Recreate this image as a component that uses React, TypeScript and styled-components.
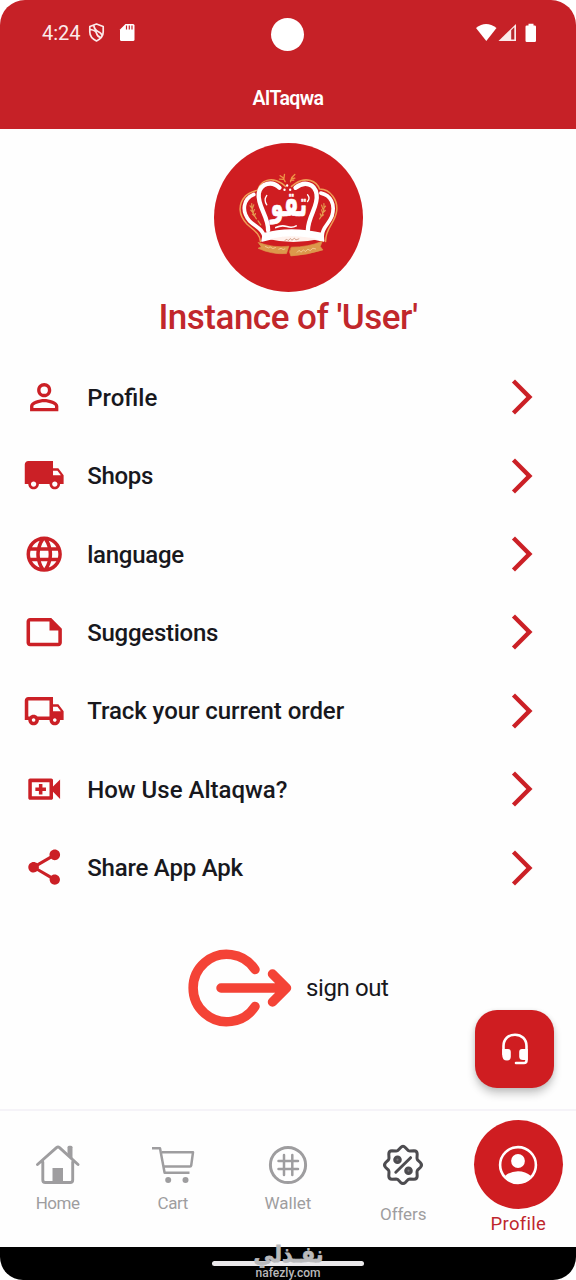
import React from "react";
import styled, { createGlobalStyle } from "styled-components";

const RED = "#cf1d21";

const GlobalStyle = createGlobalStyle`
  * { box-sizing: border-box; }
  body { margin: 0; background: #fff; }
  svg { display: block; flex: none; }
`;

const Screen = styled.div`
  position: relative;
  display: flex;
  flex-direction: column;
  width: 576px;
  height: 1280px;
  overflow: hidden;
  border-radius: 25px 25px 23px 23px;
  background: #fefefe;
  font-family: Roboto, "Liberation Sans", sans-serif;
  color: #18181d;
`;

const Header = styled.header`
  height: 129px;
  flex: none;
  background: #c62127;
  color: #fff;
`;

const StatusBar = styled.div`
  display: grid;
  grid-template-columns: 1fr 33px 1fr;
  align-items: center;
  height: 64px;
  padding: 5px 39px 0 42px;
`;

const StatusGroup = styled.div<{ $end?: boolean }>`
  display: flex;
  align-items: center;
  justify-content: ${(p) => (p.$end ? "flex-end" : "flex-start")};
  height: 24px;
  margin-bottom: 4px;
`;

const Clock = styled.span`
  width: 46px;
  font-size: 20px;
  line-height: 24px;
  color: #fbeaea;
`;

const Camera = styled.div`
  width: 33px;
  height: 33px;
  margin-left: -2px;
  border-radius: 50%;
  background: #fff;
`;

const Label = styled.span<{ $size: number; $spacing?: number; $weight?: number }>`
  font-size: ${(p) => p.$size}px;
  font-weight: ${(p) => p.$weight ?? 400};
  letter-spacing: ${(p) => p.$spacing ?? 0}px;
  line-height: 1.2;
  white-space: nowrap;
`;

const AppTitle = styled.h1`
  display: flex;
  justify-content: center;
  margin: 0;
  padding-top: 23px;
`;

const Identity = styled.section`
  display: flex;
  flex-direction: column;
  align-items: center;
  height: 229px;
  flex: none;
  padding-top: 14px;
  color: #c1272b;
`;

const UserName = styled.div`
  height: 50px;
  padding-top: 5px;
`;

const Menu = styled.nav`
  display: flex;
  flex-direction: column;
  flex: none;
`;

const MenuRow = styled.a`
  display: grid;
  grid-template-columns: 42.4px 1fr 42px;
  column-gap: 22px;
  align-items: center;
  height: 78.4px;
  padding: 0 33.4px 0 22.8px;

  span {
    padding-top: 2px;
  }
`;

const SignOut = styled.button`
  display: flex;
  align-items: center;
  gap: 14px;
  height: 78px;
  margin: 42px 0 0 188px;
  padding: 0;
  border: 0;
  background: none;
  color: inherit;
  font-family: inherit;

  span {
    padding-top: 1px;
  }
`;

const SupportButton = styled.button`
  position: absolute;
  left: 475.3px;
  top: 1009.5px;
  display: grid;
  place-items: center;
  width: 78.6px;
  height: 78.6px;
  padding: 0;
  border: 0;
  border-radius: 22px;
  background: ${RED};
  box-shadow: 0 6px 9px rgba(0, 0, 0, 0.2), 0 1px 5px rgba(0, 0, 0, 0.1);
`;

const TabBar = styled.nav`
  display: grid;
  grid-template-columns: repeat(5, 1fr);
  height: 137.5px;
  flex: none;
  margin-top: auto;
  border-top: 2px solid #f5f3f8;
  background: #fefefe;
`;

const Tab = styled.a<{ $top: number; $gap: number; $active?: boolean }>`
  display: flex;
  flex-direction: column;
  align-items: center;
  gap: ${(p) => p.$gap}px;
  padding-top: ${(p) => p.$top}px;
  color: ${(p) => (p.$active ? "#be272d" : "#9e9d9f")};
`;

const ActiveDisc = styled.div`
  display: grid;
  place-items: center;
  width: 89px;
  height: 89px;
  border-radius: 50%;
  background: ${RED};
`;

const SystemBar = styled.footer`
  display: flex;
  justify-content: center;
  height: 33.5px;
  flex: none;
  padding-top: 14px;
  background: #000;
`;

const HomeHandle = styled.div`
  width: 152px;
  height: 5.5px;
  border-radius: 3px;
  background: #ebe9eb;
`;

const Watermark = styled.div`
  position: absolute;
  left: 238px;
  top: 1236px;
`;

const MENU = [
  {
    label: "Profile",
    spacing: 0,
    d: "M12 5.9a2.1 2.1 0 1 1 0 4.2 2.1 2.1 0 0 1 0-4.2m0 9c2.97 0 6.1 1.46 6.1 2.1v1.1H5.9V17c0-.64 3.13-2.1 6.1-2.1M12 4C9.79 4 8 5.79 8 8s1.79 4 4 4 4-1.79 4-4-1.79-4-4-4zm0 9c-2.67 0-8 1.34-8 4v3h16v-3c0-2.66-5.33-4-8-4z",
  },
  {
    label: "Shops",
    spacing: -0.3,
    d: "M20 8h-3V4H3c-1.1 0-2 .9-2 2v11h2c0 1.66 1.34 3 3 3s3-1.34 3-3h6c0 1.66 1.34 3 3 3s3-1.34 3-3h2v-5l-3-4zM6 18.5c-.83 0-1.5-.67-1.5-1.5s.67-1.5 1.5-1.5 1.5.67 1.5 1.5-.67 1.5-1.5 1.5zm13.5-9l1.96 2.5H17V9.5h2.5zM18 18.5c-.83 0-1.5-.67-1.5-1.5s.67-1.5 1.5-1.5 1.5.67 1.5 1.5-.67 1.5-1.5 1.5z",
  },
  {
    label: "language",
    spacing: -0.25,
    d: "M11.99 2C6.47 2 2 6.48 2 12s4.47 10 9.99 10C17.52 22 22 17.52 22 12S17.52 2 11.99 2zm6.93 6h-2.95c-.32-1.25-.78-2.45-1.38-3.56 1.84.63 3.37 1.91 4.33 3.56zM12 4.04c.83 1.2 1.48 2.53 1.91 3.96h-3.82c.43-1.43 1.08-2.76 1.91-3.96zM4.26 14C4.1 13.36 4 12.69 4 12s.1-1.36.26-2h3.38c-.08.66-.14 1.32-.14 2 0 .68.06 1.34.14 2H4.26zm.82 2h2.95c.32 1.25.78 2.45 1.38 3.56-1.84-.63-3.37-1.9-4.33-3.56zm2.95-8H5.08c.96-1.66 2.49-2.93 4.33-3.56C8.81 5.55 8.35 6.75 8.03 8zM12 19.96c-.83-1.2-1.48-2.53-1.91-3.96h3.82c-.43 1.43-1.08 2.76-1.91 3.96zM14.34 14H9.66c-.09-.66-.16-1.32-.16-2 0-.68.07-1.35.16-2h4.68c.09.65.16 1.32.16 2 0 .68-.07 1.34-.16 2zm.25 5.56c.6-1.11 1.06-2.31 1.38-3.56h2.95c-.96 1.65-2.49 2.93-4.33 3.56zM16.36 14c.08-.66.14-1.32.14-2 0-.68-.06-1.34-.14-2h3.38c.16.64.26 1.31.26 2s-.1 1.36-.26 2h-3.38z",
  },
  {
    label: "Suggestions",
    spacing: -0.25,
    d: "M16 4H4c-1.1 0-2 .9-2 2v12.01c0 1.1.9 1.99 2 1.99h16c1.1 0 2-.9 2-2v-8l-6-6zM4 18.01V6h11v5h5v7.01H4z",
  },
  {
    label: "Track your current order",
    spacing: -0.06,
    d: "M20 8h-3V4H3c-1.1 0-2 .9-2 2v11h2c0 1.66 1.34 3 3 3s3-1.34 3-3h6c0 1.66 1.34 3 3 3s3-1.34 3-3h2v-5l-3-4zm-.5 1.5l1.96 2.5H17V9.5h2.5zM6 18c-.55 0-1-.45-1-1s.45-1 1-1 1 .45 1 1-.45 1-1 1zm2.22-3c-.55-.61-1.33-1-2.22-1s-1.67.39-2.22 1H3V6h12v9H8.22zM18 18c-.55 0-1-.45-1-1s.45-1 1-1 1 .45 1 1-.45 1-1 1z",
  },
  {
    label: "How Use Altaqwa?",
    spacing: 0,
    d: "M17 10.5V7c0-.55-.45-1-1-1H4c-.55 0-1 .45-1 1v10c0 .55.45 1 1 1h12c.55 0 1-.45 1-1v-3.5l4 4v-11l-4 4zM15 16H5V8h10v8zm-6-1h2v-2h2v-2h-2V9H9v2H7v2h2z",
  },
  {
    label: "Share App Apk",
    spacing: -0.2,
    d: "M18 16.08c-.76 0-1.44.3-1.96.77L8.91 12.7c.05-.23.09-.46.09-.7s-.04-.47-.09-.7l7.05-4.11c.54.5 1.25.81 2.04.81 1.66 0 3-1.34 3-3s-1.34-3-3-3-3 1.34-3 3c0 .24.04.47.09.7L8.04 9.81C7.5 9.31 6.79 9 6 9c-1.66 0-3 1.34-3 3s1.34 3 3 3c.79 0 1.5-.31 2.04-.81l7.12 4.16c-.05.21-.08.43-.08.65 0 1.61 1.31 2.92 2.92 2.92s2.92-1.31 2.92-2.92-1.31-2.92-2.92-2.92z",
  },
];

function Crown() {
  return (
    <svg width="149" height="149" viewBox="18 17 446 446" fill="none" strokeLinecap="round" strokeLinejoin="round">
      <circle cx="241" cy="240" r="223" fill={RED} />
      <path d="M157 312 C155 288 139 280 117 260 C90 232 90 200 112 176 C123 164 136 162 149 158 C157 128 190 117 221 138 L232 147 M250 147 L262 138 C294 117 325 130 334 155 C367 155 390 190 385 222 C380 258 351 272 352 312" stroke="#ef9d55" strokeWidth="4.500" />
      <path d="M168 296 C164 274 143 268 124 250 C98 219 107 183 137 171 M342 296 C340 270 361 262 371 236 C382 200 367 173 338 167" stroke="#fff" strokeWidth="11" />
      <path d="M214 151 C192 129 158 137 152 168 C147 205 181 236 180 278 M262 151 C289 129 320 139 325 170 C331 207 300 235 299 278" stroke="#fff" strokeWidth="13" />
      <path d="M166 289 Q246 266 344 289 L346 310 Q246 284 162 310 Z" fill="#fff" stroke="#fff" strokeWidth="5" />
      <path d="M184 305 Q246 287 330 305 Q254 322 184 305" fill="#fff1ec" />
      <path d="M230 309l6-4 4 4 7-6 4 5 8-6 4 5 9-3" stroke="#c07c60" strokeWidth="2" />
      <path d="M151 315 Q197 332 242 326 L235 348 Q190 351 150 332 L159 328 Z M250 329 Q300 329 342 311 L336 327 L344 337 Q297 352 248 355 L244 343 Z" fill="#dc984b" stroke="#dc984b" strokeWidth="2" />
      <path d="M172 327l9 4 5-3 8 5 8-3M212 335l7-3 6 4 5-2M267 344l6-6 5 6 8-7 5 5 8-7 7 4 8-7 8 2" stroke="#f6d2a0" strokeWidth="2.500" />
      <path d="M231 133l-6-12-9-6m11 10 2-14m-4 15-11-1M247 133l4-13 9-9m-10 13 10-2m-13 7 10-1" stroke="#ee9347" strokeWidth="4" />
      <path d="M237 144v.1M229 157h.1M246 157h.1" stroke="#fff" strokeWidth="7" />
      <g stroke="#e4994f" strokeWidth="3.500">
        <path d="M131 198q-1 27 14 46M126 205l7 9 4-12M128 218l7 8 4-10M133 230l6 6 3-8M150 250l8 12" />
        <path d="M347 198q3 27-13 46M352 206l-8 9-4-12M351 219l-8 8-3-10M346 232l-7 5-3-8" />
      </g>
      <path d="M176 174q-10 14 0 28M298 172q9 10 0 20" stroke="#fff" strokeWidth="4" />
      <path d="M203 270q17-8 33-3t28-2" stroke="#fff" strokeWidth="5" />
      <g transform="translate(242 236) scale(1 1.36)">
        <text textAnchor="middle" direction="rtl" fill="#fff" stroke="#fff" strokeWidth="1.500" fontFamily="'DejaVu Sans', sans-serif" fontWeight="700" fontSize="76" textLength="110" lengthAdjust="spacingAndGlyphs">تقو</text>
      </g>
    </svg>
  );
}

function StatusIconsLeft() {
  return (
    <svg width="50" height="22" viewBox="0 0 50 22">
      <path d="M8.500 2 15.200 4.500V10c0 4-2.700 7-6.700 8.900C4.500 17 1.800 14 1.800 10V4.500Z M2.600 7.500Q8 8.500 8.600 11.500T12.800 15.500M5.800 3.500Q6.500 8 10 9.500T14 13.500" fill="none" stroke="#fbeaea" strokeWidth="1.700" strokeLinejoin="round" />
      <path d="M37.500 2H45a1.500 1.500 0 0 1 1.500 1.500v14A1.500 1.500 0 0 1 45 19H33.500a1.500 1.500 0 0 1-1.500-1.500V7.500Z" fill="#fff" />
      <path d="M38.500 3.500v4M41.300 3.500v4M44 3.500v4" stroke="#c62127" strokeWidth="1.200" />
    </svg>
  );
}

function StatusIconsRight() {
  return (
    <svg width="61" height="20" viewBox="0 0 61 20">
      <path d="M0 5Q10 -3 20.500 5L10.300 18Z" fill="#fff" />
      <path d="M22.500 18 40 1v17Z" fill="#fbeaea" />
      <path d="M35.200 7.300 38.300 4.300V16.500H35.200Z" fill="#b62a2e" />
      <path d="M52.500.8h5v1.600h1.200q1.300 0 1.300 1.300V17.700q0 1.300-1.300 1.300h-7.900q-1.300 0-1.300-1.300V3.700q0-1.300 1.300-1.300h1.700Z" fill="#fff" />
    </svg>
  );
}

function LogoutIcon() {
  return (
    <svg width="104" height="78" viewBox="188 948.500 104 78" fill="none" stroke="#f44336" strokeWidth="9.500" strokeLinecap="round" strokeLinejoin="round">
      <path d="M255 969A33.700 33.700 0 1 0 255 1006M221 987.500H286M272.500 973.500 286.500 987.500 272.500 1001.500" />
    </svg>
  );
}

function HeadsetIcon() {
  return (
    <svg width="28" height="34" viewBox="0 0 28 34" fill="none" stroke="#fff" strokeWidth="2.600" strokeLinecap="round">
      <path d="M2.500 22V14C2.500 7 7.400 2.700 14 2.700S25.500 7 25.500 14V28.500Q25.500 31 23 31H15" />
      <path d="M1.200 17H7Q9.800 17 9.800 20V24.500Q9.800 28.500 6 28.500Q1.200 28.500 1.200 23ZM26.800 17H21Q18.200 17 18.200 20V24.500Q18.200 28 22 28H26.800Z" fill="#fff" stroke="none" />
    </svg>
  );
}

function HomeIcon() {
  return (
    <svg width="44" height="40" viewBox="36 1145 44 40" fill="none" stroke="#9e9d9f" strokeWidth="2.900" strokeLinecap="round" strokeLinejoin="round">
      <path d="M37.500 1164.500 56.500 1147.600Q58 1146.500 59.500 1147.600L78 1164.500M42.800 1162V1180Q42.800 1182.500 45.300 1182.500H70.200Q72.700 1182.500 72.700 1180V1162" />
      <path d="M67.500 1147.200a1.500 1.500 0 0 1 1.500-1.500h2a1.500 1.500 0 0 1 1.500 1.500V1159L67.500 1154.500Z" fill="#9e9d9f" stroke="none" />
      <path d="M52.500 1168h10.500v14h-10.500Z" fill="#9e9d9f" stroke="none" />
    </svg>
  );
}

function CartIcon() {
  return (
    <svg width="44" height="40" viewBox="151 1145 44 40" fill="none" stroke="#9e9d9f" strokeWidth="2.500" strokeLinejoin="round">
      <path d="M152 1148.300H160L164.600 1172.700H189.500M162 1152.300H193L191.200 1165.500Q191 1166.500 190 1166.500H163.800" />
      <circle cx="168.200" cy="1180" r="3" fill="#9e9d9f" stroke="none" />
      <circle cx="185.500" cy="1180" r="3" fill="#9e9d9f" stroke="none" />
    </svg>
  );
}

function WalletIcon() {
  return (
    <svg width="40" height="40" viewBox="268 1145 40 40" fill="none" stroke="#9e9d9f" strokeWidth="2.500" strokeLinecap="round">
      <circle cx="288" cy="1165" r="17.600" strokeWidth="3" />
      <path d="M284 1155V1175M292.300 1155V1175M278.500 1161H298M278.500 1169H298" />
    </svg>
  );
}

function OffersIcon() {
  return (
    <svg width="44" height="44" viewBox="0 0 44 44" fill="none" stroke="#4d4c50" strokeWidth="3" strokeLinecap="round" strokeLinejoin="round">
      <path d="M22 3.300Q23.200 3.300 24.500 4.700L27.200 7.500Q28 8 29 8L33 7.800Q36.200 7.800 36.200 11L36 15Q36 16 36.500 16.800L39.300 19.500Q41.700 22 39.300 24.500L36.500 27.200Q36 28 36 29L36.200 33Q36.200 36.200 33 36.200L29 36Q28 36 27.200 36.500L24.500 39.300Q22 41.700 19.500 39.300L16.800 36.500Q16 36 15 36L11 36.200Q7.800 36.200 7.800 33L8 29Q8 28 7.500 27.200L4.700 24.500Q2.300 22 4.700 19.500L7.500 16.800Q8 16 8 15L7.800 11Q7.800 7.800 11 7.800L15 8Q16 8 16.800 7.500L19.500 4.700Q20.800 3.300 22 3.300Z" />
      <path d="M14.800 29.200 29.600 14.700" />
      <circle cx="16.500" cy="16.700" r="2.700" strokeWidth="3.200" fill="#77767a" />
      <circle cx="27.500" cy="27.700" r="2.700" strokeWidth="3.200" fill="#77767a" />
    </svg>
  );
}

function AccountIcon() {
  return (
    <svg width="40" height="40" viewBox="0 0 40 40">
      <circle cx="20" cy="20" r="17.900" fill="none" stroke="#fff" strokeWidth="2.600" />
      <circle cx="20" cy="16" r="6.900" fill="#fff" />
      <path d="M7 31Q12.500 26.300 20 26.300T33 31Q28 38 20 38T7 31Z" fill="#fff" />
    </svg>
  );
}

export default function App() {
  return (
    <>
      <GlobalStyle />
      <Screen>
        <Header>
          <StatusBar>
            <StatusGroup>
              <Clock>4:24</Clock>
              <StatusIconsLeft />
            </StatusGroup>
            <Camera />
            <StatusGroup $end>
              <StatusIconsRight />
            </StatusGroup>
          </StatusBar>
          <AppTitle>
            <Label $size={19.5} $weight={600} $spacing={-0.6}>AlTaqwa</Label>
          </AppTitle>
        </Header>
        <Identity>
          <Crown />
          <UserName>
            <Label $size={35} $weight={500} $spacing={-0.5}>Instance of 'User'</Label>
          </UserName>
        </Identity>
        <Menu>
          {MENU.map((item) => (
            <MenuRow key={item.label}>
              <svg width="42.4" height="42.4" viewBox="0 0 24 24" fill="#cb2026"><path d={item.d} fillRule="evenodd" /></svg>
              <Label $size={24} $weight={500} $spacing={item.spacing}>{item.label}</Label>
              <svg width="42" height="42" viewBox="0 0 24 24" fill="#cb2026"><path d="M6.230 20.230 8 22l10-10L8 2 6.230 3.770 14.460 12z" /></svg>
            </MenuRow>
          ))}
        </Menu>
        <SignOut>
          <LogoutIcon />
          <Label $size={24} $spacing={-0.4}>sign out</Label>
        </SignOut>
        <TabBar>
          <Tab $top={34} $gap={8}><HomeIcon /><Label $size={17} $spacing={-0.5}>Home</Label></Tab>
          <Tab $top={34} $gap={8}><CartIcon /><Label $size={17} $spacing={-0.4}>Cart</Label></Tab>
          <Tab $top={34} $gap={8}><WalletIcon /><Label $size={17}>Wallet</Label></Tab>
          <Tab $top={32} $gap={17}><OffersIcon /><Label $size={17} $spacing={-0.1}>Offers</Label></Tab>
          <Tab $top={9} $gap={4} $active>
            <ActiveDisc><AccountIcon /></ActiveDisc>
            <Label $size={18.5} $spacing={0.3}>Profile</Label>
          </Tab>
        </TabBar>
        <SystemBar><HomeHandle /></SystemBar>
        <SupportButton aria-label="Support"><HeadsetIcon /></SupportButton>
        <Watermark>
          <svg width="100" height="44" viewBox="0 0 100 44" fill="#b9b9bb">
            <text x="50.5" y="25.5" textAnchor="middle" direction="rtl" stroke="#b9b9bb" strokeWidth="0.8" fontFamily="'DejaVu Sans', sans-serif" fontWeight="700" fontSize="22" textLength="70" lengthAdjust="spacingAndGlyphs">نفـذلي</text>
            <text x="50" y="41" textAnchor="middle" fontFamily="Roboto, sans-serif" fontWeight="500" fontSize="12.500" textLength="65" lengthAdjust="spacingAndGlyphs">nafezly.com</text>
          </svg>
        </Watermark>
      </Screen>
    </>
  );
}
